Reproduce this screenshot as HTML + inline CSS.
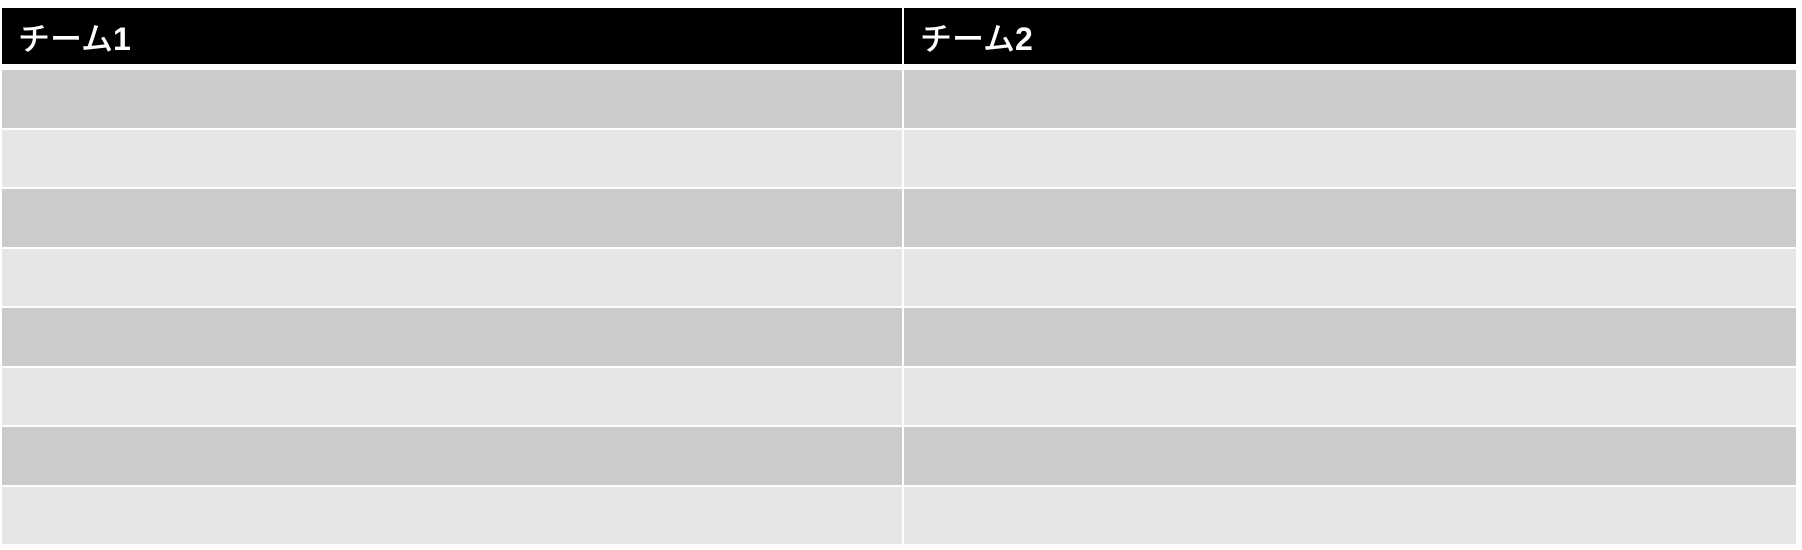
<!DOCTYPE html>
<html><head><meta charset="utf-8"><style>
body{margin:0;width:1802px;height:550px;background:#fff;position:relative;overflow:hidden}
.c{position:absolute;box-sizing:border-box}
.h{background:#000;color:#fff;font:500 32px "Liberation Sans","Noto Sans CJK JP",sans-serif;line-height:62px;padding-left:16px}
.h b{font-weight:bold}
.d{background:#cbcbcb}.l{background:#e6e6e6}
</style></head><body>
<div class="c h" style="left:2px;top:8px;width:900px;height:56px">チーム<b>1</b></div>
<div class="c h" style="left:904px;top:8px;width:892px;height:56px">チーム<b>2</b></div>
<script>
for(let i=0;i<8;i++){const t=70+i*59.5;const cls=i%2?'l':'d';
document.write(`<div class="c ${cls}" style="left:2px;top:${t}px;width:900px;height:57.5px"></div><div class="c ${cls}" style="left:904px;top:${t}px;width:892px;height:57.5px"></div>`);}
</script>
</body></html>
